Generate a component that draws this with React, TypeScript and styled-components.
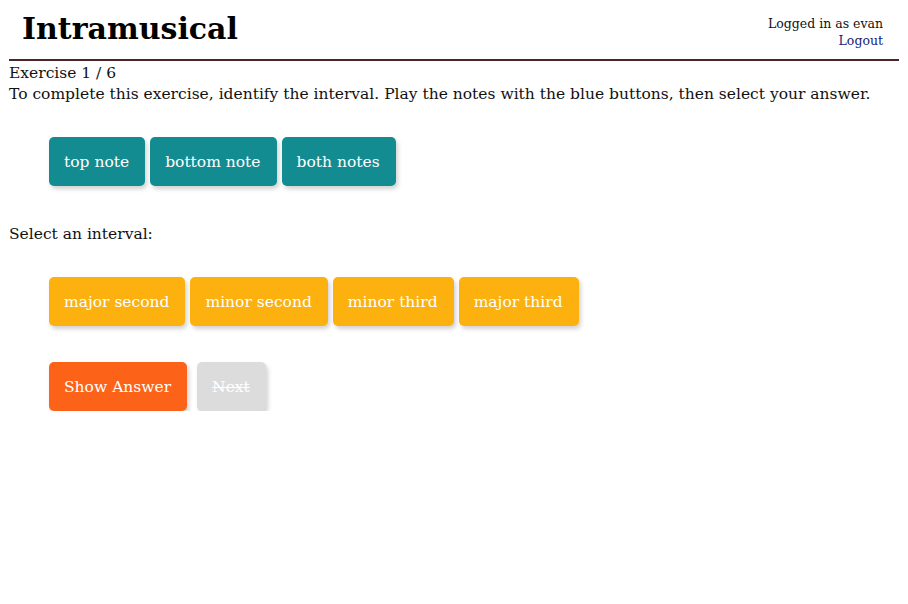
import styled, { createGlobalStyle } from "styled-components";

const GlobalStyle = createGlobalStyle`
  body {
    margin: 8px;
    background: #ffffff;
    font-family: "DejaVu Serif", "Liberation Serif", serif;
    color: #111111;
  }
`;

const Header = styled.header`
  display: flex;
  justify-content: space-between;
  align-items: flex-start;
  margin: 0 1px;
  padding: 0 16px 0 13px;
  height: 51px;
  border-bottom: 2px solid #4a2626;
`;

const Title = styled.h1`
  margin: 3px 0 0;
  font-family: "DejaVu Serif", serif;
  font-size: 30px;
  font-weight: 700;
  color: #000000;
`;

const UserBox = styled.div`
  margin-top: 7px;
  text-align: right;
  font-size: 12.5px;
  line-height: 17px;
`;

const LogoutLink = styled.a`
  color: #1b1b7a;
  text-decoration: none;
`;

const Main = styled.main`
  padding: 2px 1px 0;
  font-size: 15.5px;
  line-height: 21px;
`;

const Text = styled.div`
  margin: 0;
`;

const Prompt = styled.div`
  margin: 38px 0 0;
`;

const ButtonRow = styled.div<{ $top: number }>`
  display: flex;
  gap: 5px;
  margin: ${(p) => p.$top}px 0 0 40px;
`;

const palette = {
  teal: "#138c91",
  yellow: "#fcb10f",
  orange: "#fd6318",
  grey: "#dcdcdc",
};

const Button = styled.button<{ $tone: keyof typeof palette; $gap?: number }>`
  height: 49px;
  padding: 0 16px 0 15px;
  margin-left: ${(p) => p.$gap ?? 0}px;
  border: none;
  border-radius: 5px;
  background: ${(p) => palette[p.$tone]};
  color: #ffffff;
  font-family: "DejaVu Serif", serif;
  font-size: 15.5px;
  box-shadow: 2px 3px 4px rgba(0, 0, 0, 0.18);
  cursor: pointer;
  text-decoration: ${(p) => (p.$tone === "grey" ? "line-through" : "none")};
`;

export default function App() {
  return (
    <>
      <GlobalStyle />
      <Header>
        <Title>Intramusical</Title>
        <UserBox>
          <div>Logged in as evan</div>
          <LogoutLink href="#">Logout</LogoutLink>
        </UserBox>
      </Header>
      <Main>
        <Text>Exercise 1 / 6</Text>
        <Text>
          To complete this exercise, identify the interval. Play the notes with the blue buttons, then select
          your answer.
        </Text>
        <ButtonRow $top={32}>
          <Button $tone="teal">top note</Button>
          <Button $tone="teal">bottom note</Button>
          <Button $tone="teal">both notes</Button>
        </ButtonRow>
        <Prompt>Select an interval:</Prompt>
        <ButtonRow $top={32}>
          <Button $tone="yellow">major second</Button>
          <Button $tone="yellow">minor second</Button>
          <Button $tone="yellow">minor third</Button>
          <Button $tone="yellow">major third</Button>
        </ButtonRow>
        <ButtonRow $top={36}>
          <Button $tone="orange">Show Answer</Button>
          <Button $tone="grey" $gap={5}>
            Next
          </Button>
        </ButtonRow>
      </Main>
    </>
  );
}
